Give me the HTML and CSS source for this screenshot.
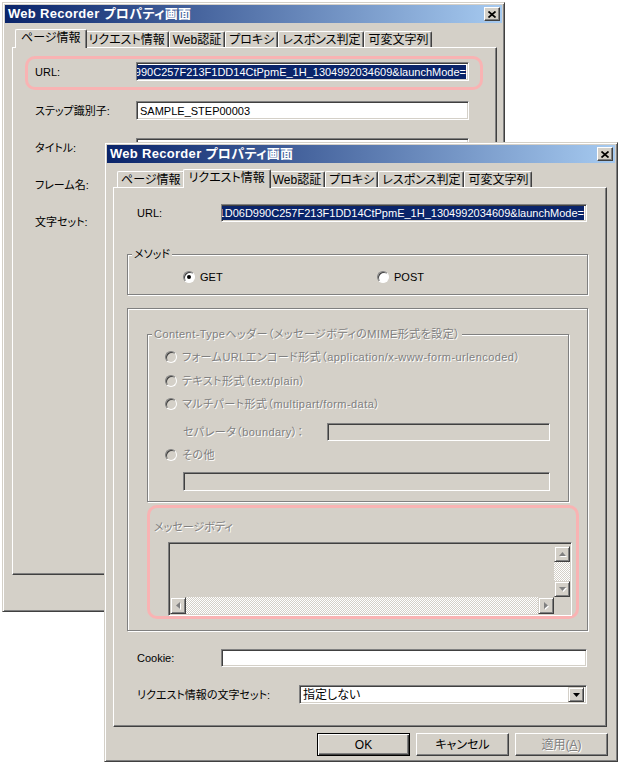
FILE: index.html
```html
<!DOCTYPE html>
<html lang="ja">
<head>
<meta charset="utf-8">
<title>Web Recorder プロパティ画面</title>
<link rel="stylesheet" href="styles.css">
</head>
<body>
<div class="desk">

  <!-- back dialog -->
  <div class="win win-back">
    <div class="titlebar">
      <span class="title">Web Recorder プロパティ画面</span>
      <span class="close"><svg width="8" height="7" viewBox="0 0 8 7"><path d="M0.5 0.5L7.5 6.5M7.5 0.5L0.5 6.5" stroke="#000" stroke-width="1.7"/></svg></span>
    </div>
    <div class="tabs">
      <span class="tab sel">ページ情報</span>
      <span class="tab">リクエスト情報</span>
      <span class="tab">Web認証</span>
      <span class="tab">プロキシ</span>
      <span class="tab">レスポンス判定</span>
      <span class="tab">可変文字列</span>
    </div>
    <div class="panel panel-back">
      <div class="hl hl-url">
        <div class="row row-back">
          <span class="lbl">URL:</span>
          <div class="field field-url"><span class="seltext">BA4C1D06D990C257F213F1DD14CtPpmE_1H_1304992034609&amp;launchMode=</span></div>
        </div>
      </div>
      <div class="back-rows">
        <div class="row row-back">
          <span class="lbl">ステップ識別子:</span>
          <div class="field">SAMPLE_STEP00003</div>
        </div>
        <div class="row row-back">
          <span class="lbl">タイトル:</span>
          <div class="field"></div>
        </div>
        <div class="row row-back">
          <span class="lbl">フレーム名:</span>
          <div class="field"></div>
        </div>
        <div class="row row-back">
          <span class="lbl">文字セット:</span>
          <div class="field"></div>
        </div>
      </div>
    </div>
  </div>

  <!-- front dialog -->
  <div class="win win-front">
    <div class="titlebar">
      <span class="title">Web Recorder プロパティ画面</span>
      <span class="close"><svg width="8" height="7" viewBox="0 0 8 7"><path d="M0.5 0.5L7.5 6.5M7.5 0.5L0.5 6.5" stroke="#000" stroke-width="1.7"/></svg></span>
    </div>
    <div class="tabs">
      <span class="tab">ページ情報</span>
      <span class="tab sel">リクエスト情報</span>
      <span class="tab">Web認証</span>
      <span class="tab">プロキシ</span>
      <span class="tab">レスポンス判定</span>
      <span class="tab">可変文字列</span>
    </div>
    <div class="panel panel-front">
      <div class="row row-front">
        <span class="lbl">URL:</span>
        <div class="field field-url"><span class="seltext">BA4C1D06D990C257F213F1DD14CtPpmE_1H_1304992034609&amp;launchMode=</span></div>
      </div>

      <fieldset class="group group-method">
        <legend>メソッド</legend>
        <div class="radios">
          <div class="ropt ropt-get"><span class="radio checked"></span><span>GET</span></div>
          <div class="ropt"><span class="radio"></span><span>POST</span></div>
        </div>
      </fieldset>

      <div class="frame">
        <fieldset class="group group-ctype">
          <legend class="dis">Content-Typeヘッダー（メッセージボディのMIME形式を設定）</legend>
          <div class="ropt dis r1"><span class="radio off"></span><span>フォームURLエンコード形式（application/x-www-form-urlencoded）</span></div>
          <div class="ropt dis r2"><span class="radio off"></span><span>テキスト形式（text/plain）</span></div>
          <div class="ropt dis r3"><span class="radio off"></span><span>マルチパート形式（multipart/form-data）</span></div>
          <div class="sep-row">
            <span class="dis sep-lbl">セパレータ（boundary）：</span>
            <div class="field off sep-field"></div>
          </div>
          <div class="ropt dis r4"><span class="radio off"></span><span>その他</span></div>
          <div class="field off other-field"></div>
        </fieldset>

        <div class="hl hl-body">
          <div class="dis body-lbl">メッセージボディ</div>
          <div class="textarea">
            <div class="ta-text"></div>
            <div class="vscroll">
              <span class="sbtn"><svg width="7" height="4" viewBox="0 0 7 4"><path d="M3.5 0L7 4H0Z" fill="#808080"/></svg></span>
              <span class="track"></span>
              <span class="sbtn"><svg width="7" height="4" viewBox="0 0 7 4"><path d="M0 0H7L3.5 4Z" fill="#808080"/></svg></span>
            </div>
            <div class="hscroll">
              <span class="sbtn"><svg width="4" height="7" viewBox="0 0 4 7"><path d="M4 0V7L0 3.5Z" fill="#808080"/></svg></span>
              <span class="track"></span>
              <span class="sbtn"><svg width="4" height="7" viewBox="0 0 4 7"><path d="M0 0L4 3.5L0 7Z" fill="#808080"/></svg></span>
            </div>
            <div class="corner"></div>
          </div>
        </div>
      </div>

      <div class="row row-front row-cookie">
        <span class="lbl">Cookie:</span>
        <div class="field"></div>
      </div>

      <div class="row row-charset">
        <span class="lbl">リクエスト情報の文字セット:</span>
        <div class="field select">
          <span class="sel-val">指定しない</span>
          <span class="dd"><svg width="7" height="4" viewBox="0 0 7 4"><path d="M0 0H7L3.5 4Z" fill="#000"/></svg></span>
        </div>
      </div>
    </div>

    <div class="buttons">
      <span class="btn btn-default">OK</span>
      <span class="btn">キャンセル</span>
      <span class="btn btn-dis">適用(<u>A</u>)</span>
    </div>
  </div>

</div>
</body>
</html>
```

FILE: styles.css
```css
html, body {
  margin: 0;
  padding: 0;
  background: #fff;
}
body {
  font-family: "Liberation Sans", "Noto Sans CJK JP", sans-serif;
  font-size: 11px;
  line-height: 14px;
  font-feature-settings: "palt";
  color: #000;
}
.desk {
  position: relative;
  width: 620px;
  height: 767px;
  overflow: hidden;
}

/* window */
.win {
  position: absolute;
  box-sizing: border-box;
  background: #D4D0C8;
  border: 1px solid;
  border-color: #D4D0C8 #404040 #404040 #D4D0C8;
  box-shadow: inset 1px 1px #fff, inset -1px -1px #808080;
  padding: 2px;
  display: flex;
  flex-direction: column;
}
.win-back { left: 2px; top: 2px; width: 503px; height: 610px; }
.win-front { left: 104px; top: 142px; width: 514px; height: 620px; }

.titlebar {
  flex: none;
  height: 18px;
  background: linear-gradient(to right, #0A246A, #A6CAF0);
  display: flex;
  align-items: center;
  justify-content: space-between;
  padding: 0 2px 0 3px;
  color: #fff;
  font-weight: bold;
  font-size: 13px;
  letter-spacing: 0.3px;
}
.close {
  width: 16px;
  height: 14px;
  box-sizing: border-box;
  background: #D4D0C8;
  border: 1px solid;
  border-color: #fff #404040 #404040 #fff;
  box-shadow: inset -1px -1px #808080;
  display: flex;
  align-items: center;
  justify-content: center;
}

/* tabs */
.tabs {
  flex: none;
  display: flex;
  align-items: flex-end;
  height: 19px;
  margin-top: 6px;
  margin-bottom: -1px;
  padding-left: 10px;
  position: relative;
  z-index: 1;
}
.win-back .tabs { padding-left: 12px; }
.tab {
  box-sizing: border-box;
  height: 16px;
  margin-bottom: 1px;
  padding: 0 3px;
  border-left: 1px solid #fff;
  border-top: 1px solid #fff;
  border-right: 1px solid #404040;
  box-shadow: inset -1px 0 #808080;
  border-radius: 2px 2px 0 0;
  background: #D4D0C8;
  display: flex;
  align-items: center;
  font-size: 12px;
  white-space: nowrap;
}
.tab.sel {
  height: 19px;
  margin: 0 -2px;
  padding: 0 5px 2px;
  position: relative;
  z-index: 2;
}

/* panel */
.panel {
  flex: none;
  box-sizing: border-box;
  border: 1px solid;
  border-color: #fff #404040 #404040 #fff;
  box-shadow: inset -1px -1px #808080;
  display: flex;
  flex-direction: column;
  align-items: flex-start;
}
.panel-back { height: 528px; margin: 0 5px 0 7px; }
.panel-front { height: 540px; margin: 0 8px 0 6px; }

/* rows */
.row {
  display: grid;
  align-items: center;
  height: 18px;
}
.row-back { grid-template-columns: 101px 333px; height: 19px; }
.row-front { grid-template-columns: 84px 366px; margin-left: 23px; }
.row-front:first-child { margin-top: 16px; }
.row-cookie { margin-top: 18px; }
.row-charset {
  grid-template-columns: 162px 288px;
  margin-left: 23px;
  margin-top: 18px;
  height: 19px;
}
.lbl { white-space: nowrap; }

.back-rows {
  margin: 11px 0 0 22px;
  display: flex;
  flex-direction: column;
  gap: 18px;
}

/* fields */
.field {
  box-sizing: border-box;
  height: 100%;
  border: 1px solid;
  border-color: #808080 #fff #fff #808080;
  box-shadow: inset 1px 1px #404040, inset -1px -1px #D4D0C8;
  background: #fff;
  display: flex;
  align-items: center;
  padding: 0 3px;
  overflow: hidden;
  white-space: nowrap;
}
.field.off { background: #D4D0C8; }
.field-url { justify-content: flex-end; padding: 0 2px; }
.seltext {
  flex: none;
  background: #0A246A;
  color: #fff;
  line-height: 14px;
}
.select { padding: 0 2px 0 3px; justify-content: space-between; }
.sel-val { font-size: 12px; }
.dd {
  box-sizing: border-box;
  width: 16px;
  height: 15px;
  border: 1px solid;
  border-color: #D4D0C8 #404040 #404040 #D4D0C8;
  box-shadow: inset 1px 1px #fff, inset -1px -1px #808080;
  background: #D4D0C8;
  display: flex;
  align-items: center;
  justify-content: center;
}

/* highlight (annotation) */
.hl {
  box-sizing: border-box;
  border: 3px solid #F9B3B3;
  border-radius: 10px;
}
.hl-url {
  margin: 8px 0 0 12px;
  width: 458px;
  height: 34px;
  padding: 3px 0 0 7px;
}
.hl-body {
  margin: 3px 0 0 19px;
  width: 432px;
  height: 114px;
  padding: 12px 0 0 4px;
}

/* group boxes */
.group {
  box-sizing: border-box;
  margin: 0;
  padding: 0;
  min-inline-size: 0;
  border: 1px solid #808080;
  box-shadow: inset 1px 1px #fff, 1px 1px #fff;
}
.group legend {
  padding: 0 2px;
  margin-left: 4px;
  background: #D4D0C8;
  line-height: 14px;
  white-space: nowrap;
}
.group-method {
  margin: 25px 0 0 13px;
  width: 461px;
  height: 48px;
}
.radios {
  display: flex;
  padding: 8px 0 0 55px;
}
.ropt {
  display: flex;
  align-items: center;
  height: 16px;
  gap: 5px;
  white-space: nowrap;
}
.ropt-get { width: 194px; }
.radio {
  flex: none;
  position: relative;
  width: 12px;
  height: 12px;
  box-sizing: border-box;
  border-radius: 50%;
  border: 1px solid;
  border-color: #808080 #fff #fff #808080;
  box-shadow: inset 1px 1px #404040;
  background: #fff;
}
.radio.off { background: #D4D0C8; }
.radio.checked::after {
  content: "";
  position: absolute;
  left: 3px;
  top: 3px;
  width: 4px;
  height: 4px;
  border-radius: 50%;
  background: #000;
}

.frame {
  box-sizing: border-box;
  margin: 13px 0 0 13px;
  width: 461px;
  height: 323px;
  border: 1px solid #808080;
  box-shadow: inset 1px 1px #fff, 1px 1px #fff;
  display: flex;
  flex-direction: column;
  align-items: flex-start;
}
.group-ctype {
  margin: 18px 0 0 19px;
  width: 422px;
  height: 175px;
  letter-spacing: 0.45px;
}
.dis {
  color: #808080;
  text-shadow: 1px 1px 0 #fff;
}
.group-ctype .ropt { margin-left: 17px; }
.r1 { margin-top: 8px; }
.r2 { margin-top: 8px; }
.r3 { margin-top: 7px; }
.r4 { margin-top: 6px; }
.sep-row {
  display: grid;
  grid-template-columns: 144px 223px;
  align-items: center;
  height: 18px;
  margin: 11px 0 0 35px;
}
.sep-lbl { white-space: nowrap; }
.other-field {
  margin: 9px 0 0 35px;
  width: 367px;
  height: 19px;
}

/* textarea */
.body-lbl { height: 14px; }
.textarea {
  box-sizing: border-box;
  margin: 8px 0 0 14px;
  width: 404px;
  height: 74px;
  border: 1px solid;
  border-color: #808080 #fff #fff #808080;
  box-shadow: inset 1px 1px #404040, inset -1px -1px #D4D0C8;
  padding: 1px;
  display: grid;
  grid-template-columns: 1fr 16px;
  grid-template-rows: 1fr 17px;
  background: #D4D0C8;
}
.vscroll {
  display: flex;
  flex-direction: column;
  padding-top: 2px;
}
.hscroll {
  display: flex;
}
.track {
  flex: 1;
  background: repeating-conic-gradient(#fff 0 25%, #D4D0C8 0 50%) 0 0 / 2px 2px;
}
.sbtn {
  flex: none;
  box-sizing: border-box;
  width: 16px;
  height: 16px;
  border: 1px solid;
  border-color: #D4D0C8 #404040 #404040 #D4D0C8;
  box-shadow: inset 1px 1px #fff, inset -1px -1px #808080;
  background: #D4D0C8;
  display: flex;
  align-items: center;
  justify-content: center;
}
.hscroll .sbtn { height: 17px; }
.sbtn svg { filter: drop-shadow(1px 1px 0 #fff); }
.corner { background: #D4D0C8; }

/* buttons */
.buttons {
  display: flex;
  justify-content: flex-end;
  gap: 6px;
  margin-top: 6px;
  padding-right: 7px;
}
.btn {
  box-sizing: border-box;
  width: 93px;
  height: 23px;
  border: 1px solid;
  border-color: #fff #404040 #404040 #fff;
  box-shadow: inset -1px -1px #808080;
  display: flex;
  align-items: center;
  justify-content: center;
  font-size: 12px;
}
.btn-default {
  border-color: #000;
  box-shadow: inset 1px 1px #fff, inset -1px -1px #404040, inset -2px -2px #808080;
}
.btn-dis {
  color: #808080;
  text-shadow: 1px 1px 0 #fff;
}
```
